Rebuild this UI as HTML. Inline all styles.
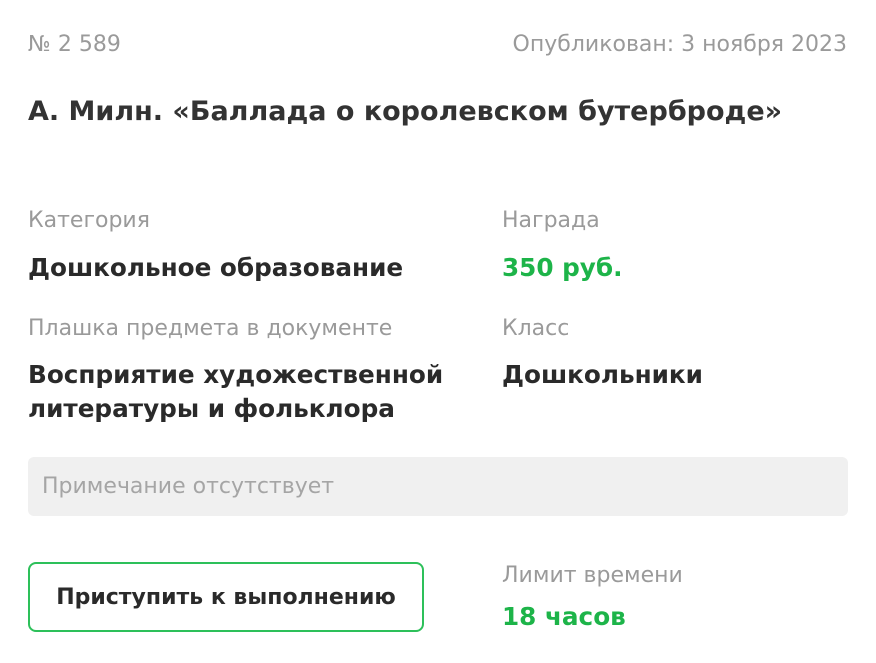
<!DOCTYPE html>
<html><head><meta charset="utf-8"><style>
body{margin:0;width:876px;height:663px;background:#fff;font-family:"DejaVu Sans",sans-serif;position:relative;overflow:hidden}
.a{position:absolute;white-space:nowrap}
.g{color:#9a9a9a;font-size:22px}
.v{color:#2a2a2a;font-size:24.7px;font-weight:bold}
.gr{color:#1db449}
</style></head><body>
<div class="a g" style="left:28px;top:32px">№ 2 589</div>
<div class="a g" style="right:29px;top:32px">Опубликован: 3 ноября 2023</div>
<div class="a" style="left:28px;top:96px;font-size:27px;font-weight:bold;color:#333">А. Милн. «Баллада о королевском бутерброде»</div>
<div class="a g" style="left:28px;top:208px">Категория</div>
<div class="a v" style="left:28px;top:253px">Дошкольное образование</div>
<div class="a g" style="left:502px;top:208px">Награда</div>
<div class="a v gr" style="left:502px;top:253px">350 руб.</div>
<div class="a g" style="left:28px;top:316px">Плашка предмета в документе</div>
<div class="a v" style="left:28px;top:358px;line-height:34px">Восприятие художественной<br>литературы и фольклора</div>
<div class="a g" style="left:502px;top:316px">Класс</div>
<div class="a v" style="left:502px;top:360px">Дошкольники</div>
<div class="a" style="left:28px;top:457px;width:820px;height:59px;background:#f0f0f0;border-radius:6px"></div>
<div class="a g" style="left:42px;top:474px;color:#a5a5a5">Примечание отсутствует</div>
<div class="a" style="left:28px;top:562px;width:392px;height:66px;border:2px solid #2dc05a;border-radius:8px;display:flex;align-items:center;justify-content:center;font-size:22px;font-weight:bold;color:#2a2a2a">Приступить к выполнению</div>
<div class="a g" style="left:502px;top:563px">Лимит времени</div>
<div class="a v gr" style="left:502px;top:602px">18 часов</div>
</body></html>
